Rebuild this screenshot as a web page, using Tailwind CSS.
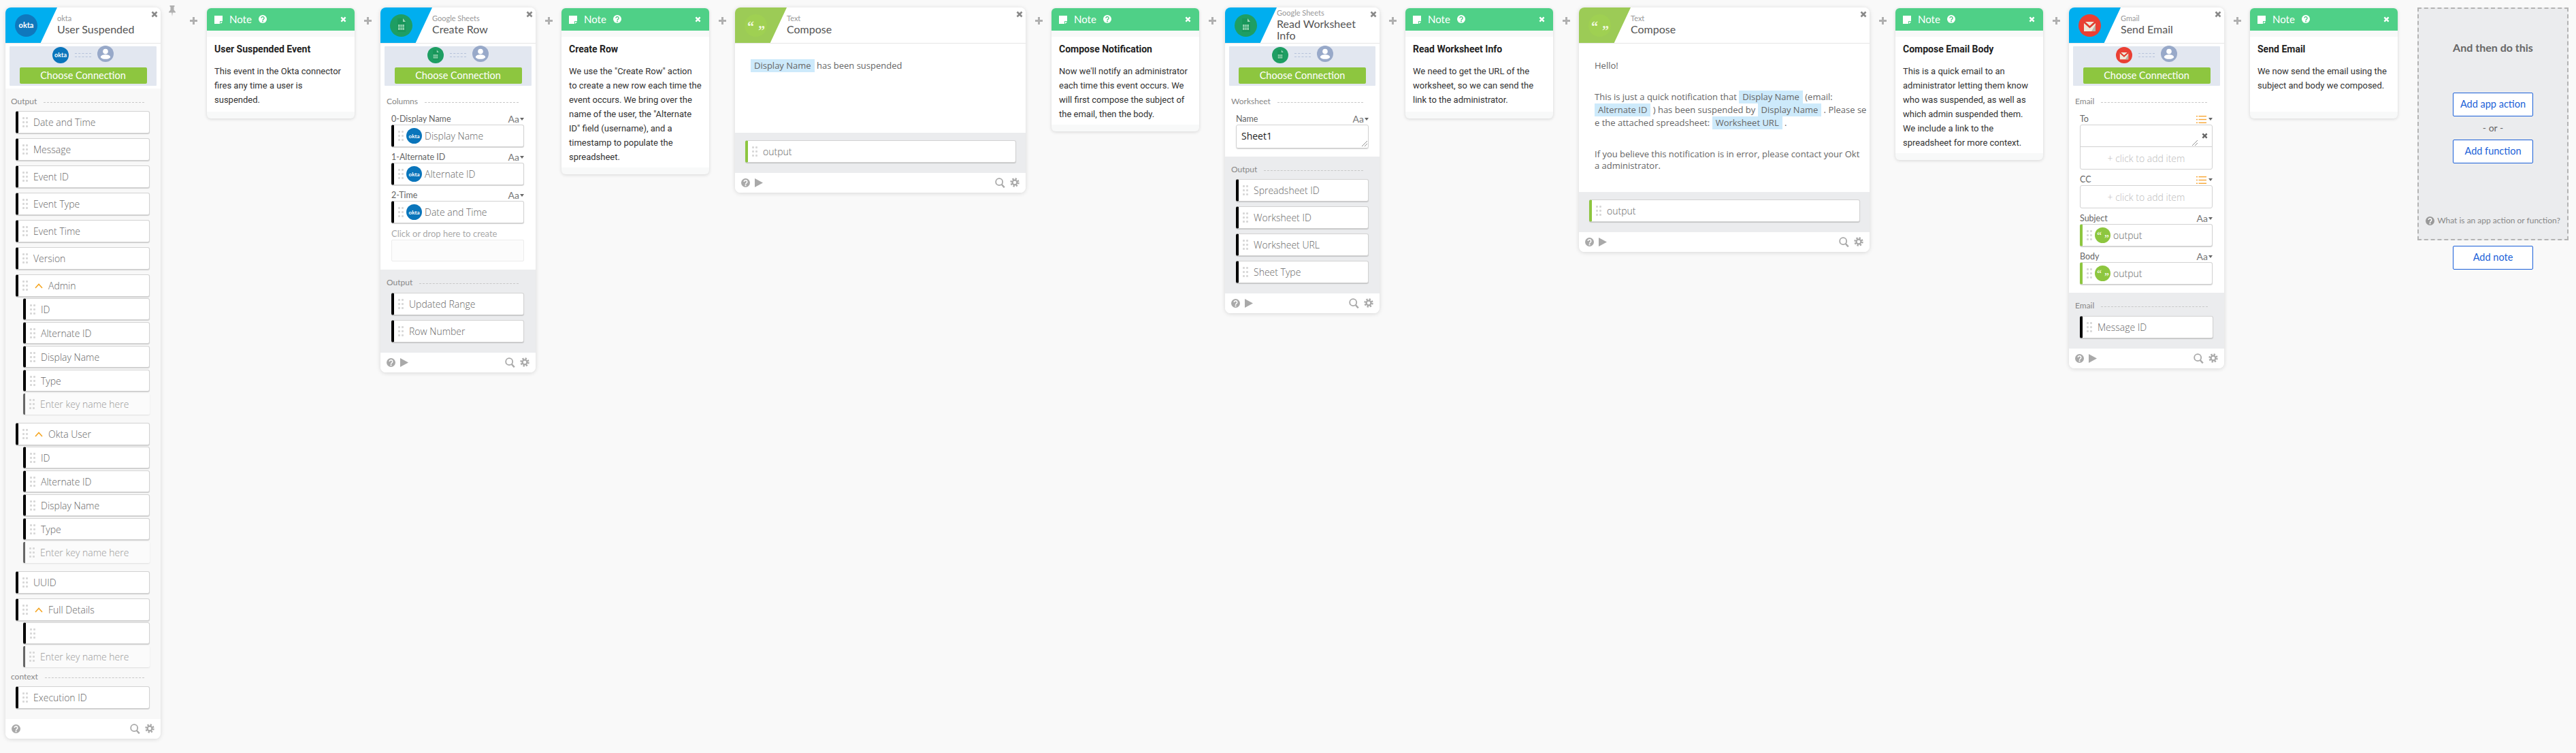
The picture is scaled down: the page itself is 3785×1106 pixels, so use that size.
<!DOCTYPE html>
<html lang="en">
<head>
  <meta charset="UTF-8" />
  <title>Zap editor</title>
  <script src="https://cdn.jsdelivr.net/npm/@tailwindcss/browser@4"></script>
</head>
<body class="bg-[#f9f9f9] font-['Open_Sans',sans-serif]">
  <svg class="hidden">
    <symbol id="dots" viewBox="0 0 8 15"><g fill="currentColor"><rect width="3" height="3" rx="1"/><rect x="5" width="3" height="3" rx="1"/><rect y="6" width="3" height="3" rx="1"/><rect x="5" y="6" width="3" height="3" rx="1"/><rect y="12" width="3" height="3" rx="1"/><rect x="5" y="12" width="3" height="3" rx="1"/></g></symbol>
    <symbol id="close" viewBox="0 0 10 10"><path d="M1.5 1.5l7 7M8.5 1.5l-7 7" stroke="currentColor" stroke-width="2.6" fill="none"/></symbol>
    <symbol id="help" viewBox="0 0 14 14"><circle cx="7" cy="7" r="7" fill="currentColor"/><path d="M4.6 5.4a2.4 2.4 0 1 1 3.7 2c-.9.6-1.3 1-1.3 1.9" stroke="#fff" stroke-width="1.7" fill="none"/><rect x="6" y="10.2" width="2" height="2" fill="#fff"/></symbol>
    <symbol id="helpgreen" viewBox="0 0 14 14"><circle cx="7" cy="7" r="7" fill="#fff"/><path d="M4.6 5.4a2.4 2.4 0 1 1 3.7 2c-.9.6-1.3 1-1.3 1.9" stroke="#4fd087" stroke-width="1.7" fill="none"/><rect x="6" y="10.2" width="2" height="2" fill="#4fd087"/></symbol>
    <symbol id="play" viewBox="0 0 12 13"><path d="M0 0L12 6.5L0 13Z" fill="currentColor"/></symbol>
    <symbol id="search" viewBox="0 0 15 15"><circle cx="6.2" cy="6.2" r="5" stroke="currentColor" stroke-width="1.8" fill="none"/><path d="M9.8 10l4 4.4" stroke="currentColor" stroke-width="2.4"/></symbol>
    <symbol id="gear" viewBox="0 0 14 14"><circle cx="7" cy="7" r="5.3" stroke="currentColor" stroke-width="2.8" stroke-dasharray="2.2 1.96" fill="none"/><circle cx="7" cy="7" r="3.4" stroke="currentColor" stroke-width="2.2" fill="none"/></symbol>
    <symbol id="page" viewBox="0 0 12 12"><path d="M0 0H12V8H8V12H0ZM9 9H12L9 12Z" fill="#fff"/></symbol>
    <symbol id="person" viewBox="0 0 24 24"><circle cx="12" cy="12" r="12" fill="#98a9c9"/><circle cx="12" cy="8.6" r="3.8" fill="#fff"/><path d="M4.8 17.2c.3-3 2.8-4 7.2-4s6.9 1 7.2 4c-1.2 1.7-3.8 2.6-7.2 2.6s-6-.9-7.2-2.6z" fill="#fff"/></symbol>
    <symbol id="pin" viewBox="0 0 10 16"><path d="M1.5 0H8.500V1.500L7.500 2.200V6.500L10 9.500V10.500H5.800L5 16L4.200 10.500H0V9.500L2.500 6.500V2.200L1.500 1.500Z" fill="currentColor"/></symbol>
    <symbol id="plus" viewBox="0 0 11 11"><path d="M5.500 0V11M0 5.500H11" stroke="currentColor" stroke-width="3"/></symbol>
    <symbol id="chev" viewBox="0 0 12 8"><path d="M1 7L6 1.500L11 7" stroke="currentColor" stroke-width="1.600" fill="none"/></symbol>
    <symbol id="caret" viewBox="0 0 6 4"><path d="M0 0H6L3 4Z" fill="currentColor"/></symbol>
    <symbol id="list" viewBox="0 0 15 11"><g fill="currentColor"><rect width="2" height="1.400"/><rect x="3.500" width="11.500" height="1.400"/><rect y="4.800" width="2" height="1.400"/><rect x="3.500" y="4.800" width="11.500" height="1.400"/><rect y="9.600" width="2" height="1.400"/><rect x="3.500" y="9.600" width="11.500" height="1.400"/></g></symbol>
    <symbol id="resize" viewBox="0 0 8 8"><path d="M0 8L8 0M4 8L8 4" stroke="#777" stroke-width=".8"/></symbol>
    <symbol id="sheet" viewBox="0 0 33 33"><path d="M11 6h8l4 5v15H11z" fill="#19965a"/><path d="M19 6l4 5h-4z" fill="#9fd6b8"/><path d="M12 15h9v8h-9z" fill="#8fd1ad"/><path d="M15 15v8M18 15v8M12 19h9" stroke="#19965a" stroke-width=".7"/></symbol>
    <symbol id="gmail" viewBox="0 0 33 33"><path d="M8 11h17v14H8z" fill="#efe8da"/><path d="M25 25H19L25 15z" fill="#b9b2a6"/><path d="M8 11h2L16.500 17L23 11h2v2L16.500 20.500L8 13z" fill="#e23d2e"/></symbol>
  </svg>

  <div id="board" class="flex items-start pl-[8px] pt-[11px] min-h-screen text-[#777]"></div>

  <script>
    const ic = (id, cls) => `<svg class="${cls}"><use href="#${id}"/></svg>`;
    const dots = ic("dots", "w-[8px] h-[15px] shrink-0 text-[#d8d8d8]");

    // little round service badges
    const okta = big => big
      ? `<div class="w-[33px] h-[33px] rounded-full bg-[#0f78bd] flex items-center justify-center text-white text-[11px] font-bold font-['Lato']">okta</div>`
      : `<div class="w-[24px] h-[24px] rounded-full bg-[#0a75bb] shrink-0 flex items-center justify-center text-white text-[9px] font-bold font-['Lato']">okta</div>`;
    const sheets = big => big
      ? `<div class="w-[33px] h-[33px] rounded-full bg-[#1e9e63]">${ic("sheet", "w-[33px] h-[33px]")}</div>`
      : `<div class="w-[24px] h-[24px] rounded-full bg-[#1e9e63] shrink-0">${ic("sheet", "w-[24px] h-[24px]")}</div>`;
    const gmail = big => big
      ? `<div class="w-[33px] h-[33px] rounded-full bg-[#ea3f33]">${ic("gmail", "w-[33px] h-[33px]")}</div>`
      : `<div class="w-[24px] h-[24px] rounded-full bg-[#ea3f33] shrink-0">${ic("gmail", "w-[24px] h-[24px]")}</div>`;
    const quoteBig = `<div class="w-[33px] h-[33px] rounded-full bg-[#9fd052] relative font-['Liberation_Serif'] font-bold text-[20px] leading-none text-[#eef7dc]"><span class="absolute left-[4px] top-[8px]">“</span><span class="absolute left-[20px] top-[14px]">”</span></div>`;
    const quoteSm = `<div class="w-[23px] h-[23px] rounded-full bg-[#8dc63f] shrink-0 relative font-['Liberation_Serif'] font-bold text-[14px] leading-none text-[#eef7dc]"><span class="absolute left-[3px] top-[5px]">“</span><span class="absolute left-[14px] top-[10px]">”</span></div>`;
    const oktaTok = `<div class="w-[23px] h-[23px] rounded-full bg-[#0a75bb] shrink-0 flex items-center justify-center text-white text-[8px] font-bold font-['Lato']">okta</div>`;

    const field = (text, o = {}) => `
      <div class="flex items-center bg-white border border-[#d2d2d2] border-l-4 ${o.bar || "border-l-black"} rounded-[3px] shadow-[0_1px_1px_rgba(0,0,0,.18)] pl-[6px] ${o.child ? "h-[32px] ml-[11px] mb-[3px]" : "h-[33px]"} ${o.mb || ""}">
        ${dots}
        ${o.tok ? `<span class="ml-[4px]">${o.tok}</span><span class="ml-[4px] text-[14px] font-light text-[#666]">${text}</span>` : ""}
        ${o.parent ? ic("chev", "w-[12px] h-[8px] ml-[10px] text-[#f5a623]") + `<span class="ml-[8px] text-[14px] font-light text-[#666]">${text}</span>` : ""}
        ${!o.tok && !o.parent ? `<span class="ml-[8px] text-[14px] font-light text-[#666]">${text}</span>` : ""}
      </div>`;
    const enterKey = `
      <div class="flex items-center h-[31px] ml-[11px] mb-[12px] bg-[#fbfbfb] border-l-[3px] border-l-[#666] rounded-[2px] shadow-[0_1px_2px_rgba(0,0,0,.1)] pl-[6px]">
        ${dots}<span class="ml-[8px] text-[14px] font-light text-[#999]">Enter key name here</span>
      </div>`;

    const head = (label, o = "") => `
      <div class="flex items-center h-[16px] mb-[6px] -ml-[7px] mr-[8px] ${o}">
        <span class="text-[12px] leading-[16px] text-[#888] font-['Lato']">${label}</span>
        <span class="flex-1 ml-[10px] mt-[3px] border-t border-dashed border-[#c8c8c8]"></span>
      </div>`;
    const aa = `<span class="flex items-center gap-[1px] text-[14px] leading-none text-[#777] font-['Lato']">Aa${ic("caret", "w-[6px] h-[4px] text-[#666]")}</span>`;
    const listType = `<span class="flex items-center gap-[3px]">${ic("list", "w-[15px] h-[11px] text-[#f7a634]")}${ic("caret", "w-[6px] h-[4px] text-[#666]")}</span>`;
    const label = (text, right = aa, cls = "mt-[7px]") => `
      <div class="flex items-center justify-between h-[16px] ${cls}"><span class="text-[12.5px] leading-[16px] text-[#666] font-['Lato']">${text}</span>${right}</div>`;

    const footer = play => `
      <div class="h-[29px] bg-white flex items-center pl-[9px] pr-[9px] gap-[7px] text-[#a9a9a9]">
        ${ic("help", "w-[13px] h-[13px]")}
        ${play ? ic("play", "w-[12px] h-[13px]") : ""}
        ${ic("search", "w-[15px] h-[15px] ml-auto")}
        ${ic("gear", "w-[14px] h-[14px] mb-[2px]")}
      </div>`;

    const header = (logo, service, title, color) => `
      <div class="relative h-[53px] bg-white border-b border-[#e6e6e6] flex">
        <div class="w-[76px] h-[52px] shrink-0 ${color} [clip-path:polygon(0_0,100%_0,68%_100%,0_100%)] pl-[14px] pt-[10px]">${logo}</div>
        <div class="flex flex-col justify-center -mt-[2px] pr-[16px]">
          <div class="text-[11px] leading-[12px] text-[#999] font-['Lato']">${service}</div>
          <div class="text-[16px] leading-[17px] text-[#555] font-['Lato'] mt-[1px]">${title}</div>
        </div>
        ${ic("close", "absolute right-[4px] top-[5px] w-[10px] h-[10px] text-[#888]")}
      </div>`;

    const connect = small => `
      <div class="bg-white pt-[4px] pb-[4px] px-[6px]">
        <div class="h-[58px] bg-[#e2e7f0] rounded-[1px] flex flex-col items-center">
          <div class="flex h-[26px] -mt-[1px] mb-[6px] items-start">
            <div class="mt-[2px]">${small}</div>
            <div class="w-[24px] mx-[9px] mt-[11px] h-[6px] border-y border-dashed border-[#b5c2da]"></div>
            ${ic("person", "w-[24px] h-[24px]")}
          </div>
          <div class="w-[187px] h-[24px] rounded-[2px] bg-[#8dc63f] text-white text-[14.5px] leading-[24px] text-center font-['Lato']">Choose Connection</div>
        </div>
      </div>`;

    const card = (w, body) => `<div class="${w} shrink-0 rounded-[8px] overflow-hidden bg-white shadow-[0_1px_6px_rgba(0,0,0,.14)]">${body}</div>`;

    const note = (title, text) => `
      <div class="w-[217px] shrink-0 mt-[1px] rounded-[6px] overflow-hidden bg-[#f8f9f9] shadow-[0_1px_5px_rgba(0,0,0,.14)]">
        <div class="h-[33px] bg-[#4fd087] flex items-center pl-[11px] pr-[12px] text-white">
          ${ic("page", "w-[12px] h-[12px]")}
          <span class="ml-[10px] text-[15px] font-['Lato']">Note</span>
          ${ic("helpgreen", "w-[12px] h-[12px] ml-[10px] -mt-[1px]")}
          ${ic("close", "w-[9px] h-[9px] ml-auto text-white")}
        </div>
        <div class="mt-[9px] mb-[10px] bg-white min-h-[110px] px-[11px] pt-[9px] pb-[5px] font-['Roboto']">
          <div class="text-[14px] leading-[18px] font-bold text-[#222]">${title}</div>
          <p class="mt-[13px] text-[13px] leading-[21px] text-[#333]">${text}</p>
        </div>
      </div>`;

    const gap = `<div class="w-[38px] shrink-0 flex justify-center pt-[14px] text-[#b0b0b0]">${ic("plus", "w-[11px] h-[11px]")}</div>`;
    const firstGap = `
      <div class="w-[68px] shrink-0 relative text-[#b0b0b0]">
        ${ic("pin", "absolute left-[12px] -top-[3px] w-[10px] h-[16px]")}
        <div class="flex justify-end pr-[14px] pt-[14px]">${ic("plus", "w-[11px] h-[11px]")}</div>
      </div>`;

    const pill = t => `<span class="inline-block h-[19px] bg-[#cdeafb] px-[5px] text-[#666] leading-[19px]">${t}</span>`;
    const greenBar = "border-l-[#8dc63f]";

    // ---- trigger
    const trigger = card("w-[228px]", header(okta(true), "okta", "User Suspended", "bg-[#00aeef]") + connect(okta(false)) + `
      <div class="bg-[#f8f8f8] pt-[11px] pb-[15px] pl-[15px] pr-[16px]">
        ${head("Output")}
        ${["Date and Time","Message","Event ID","Event Type","Event Time","Version"].map(t => field(t, {mb: "mb-[7px]"})).join("")}
        ${field("Admin", {parent: true, mb: "mb-[2px]"})}
        ${["ID","Alternate ID","Display Name","Type"].map(t => field(t, {child: true})).join("")}
        ${enterKey}
        ${field("Okta User", {parent: true, mb: "mb-[2px]"})}
        ${["ID","Alternate ID","Display Name","Type"].map(t => field(t, {child: true})).join("")}
        ${enterKey}
        ${field("UUID", {mb: "mb-[7px]"})}
        ${field("Full Details", {parent: true, mb: "mb-[2px]"})}
        ${field("", {child: true})}
        ${enterKey.replace("mb-[12px]", "mb-[6px]")}
        ${head("context")}
        ${field("Execution ID")}
      </div>` + footer(false));

    // ---- create row
    const createRow = card("w-[228px]", header(sheets(true), "Google Sheets", "Create Row", "bg-[#00aeef]") + connect(sheets(false)) + `
      <div class="pt-[11px] pb-[12px] pl-[16px] pr-[17px]">
        ${head("Columns", "mb-[10px]")}
        ${label("0-Display Name", aa, "")}
        ${field("Display Name", {tok: oktaTok})}
        ${label("1-Alternate ID")}
        ${field("Alternate ID", {tok: oktaTok})}
        ${label("2-Time")}
        ${field("Date and Time", {tok: oktaTok})}
        <div class="mt-[7px] h-[17px] text-[13px] leading-[16px] text-[#aaa] font-['Lato']">Click or drop here to create</div>
        <div class="h-[32px] border border-[#ececec] rounded-[2px] bg-[#fcfcfc]"></div>
      </div>
      <div class="bg-[#ebecee] pt-[11px] pb-[15px] pl-[16px] pr-[17px]">
        ${head("Output", "mb-[7px]")}
        ${field("Updated Range", {mb: "mb-[7px]"})}
        ${field("Row Number")}
      </div>` + footer(true));

    // ---- compose 1
    const compose = (body, h) => card("w-[427px]", header(quoteBig, "Text", "Compose", "bg-[#9ccb56]") + `
      <div class="${h} px-[23px] text-[13px] text-[#666] whitespace-nowrap">${body}</div>
      <div class="bg-[#ebecee] pt-[11px] pb-[15px] pl-[15px] pr-[14px]">${field("output", {bar: greenBar})}</div>` + footer(true));

    const compose1 = compose(`<p class="pt-[23px] leading-[19px]">${pill("Display Name")} has been suspended</p>`, "h-[131px]");
    const compose2 = compose(`
      <p class="pt-[24px] leading-[17px]">Hello!</p>
      <p class="mt-[28px] leading-[19px]">This is just a quick notification that ${pill("Display Name")} (email:<br>${pill("Alternate ID")} ) has been suspended by ${pill("Display Name")} . Please se<br>e the attached spreadsheet: ${pill("Worksheet URL")} .</p>
      <p class="mt-[28px] leading-[17px]">If you believe this notification is in error, please contact your Okt<br>a administrator.</p>`, "h-[218px]");

    // ---- read worksheet
    const readWs = card("w-[227px]", header(sheets(true), "Google Sheets", "Read Worksheet Info", "bg-[#00aeef]") + connect(sheets(false)) + `
      <div class="pt-[11px] pb-[12px] pl-[16px] pr-[16px]">
        ${head("Worksheet", "mb-[10px]")}
        ${label("Name", aa, "")}
        <div class="relative h-[35px] border border-[#d2d2d2] rounded-[3px] shadow-[0_1px_1px_rgba(0,0,0,.18)] pl-[7px] text-[14px] leading-[32px] text-[#222]">Sheet1${ic("resize", "absolute right-[1px] bottom-[2px] w-[8px] h-[8px]")}</div>
      </div>
      <div class="bg-[#ebecee] pt-[11px] pb-[15px] pl-[16px] pr-[16px]">
        ${head("Output")}
        ${field("Spreadsheet ID", {mb: "mb-[7px]"})}
        ${field("Worksheet ID", {mb: "mb-[7px]"})}
        ${field("Worksheet URL", {mb: "mb-[7px]"})}
        ${field("Sheet Type")}
      </div>` + footer(true));

    // ---- send email
    const addItem = `<div class="text-center text-[14px] font-light text-[#bbb]">+ click to add item</div>`;
    const sendMail = card("w-[228px]", header(gmail(true), "Gmail", "Send Email", "bg-[#00aeef]") + connect(gmail(false)) + `
      <div class="pt-[11px] pb-[12px] pl-[16px] pr-[17px]">
        ${head("Email", "mb-[10px]")}
        ${label("To", listType, "")}
        <div class="h-[66px] border border-[#d2d2d2] rounded-[3px] flex flex-col">
          <div class="relative h-[32px] border-b border-[#d2d2d2]">
            ${ic("close", "absolute right-[6px] top-[11px] w-[9px] h-[9px] text-[#666]")}
            ${ic("resize", "absolute right-[21px] bottom-[1px] w-[8px] h-[8px]")}
          </div>
          <div class="flex-1 flex items-center justify-center">${addItem}</div>
        </div>
        ${label("CC", listType)}
        <div class="h-[34px] border border-[#d2d2d2] rounded-[3px] flex items-center justify-center">${addItem}</div>
        ${label("Subject")}
        ${field("output", {bar: greenBar, tok: quoteSm})}
        ${label("Body")}
        ${field("output", {bar: greenBar, tok: quoteSm})}
      </div>
      <div class="bg-[#ebecee] pt-[11px] pb-[15px] pl-[16px] pr-[16px]">
        ${head("Email", "mb-[7px]")}
        ${field("Message ID")}
      </div>` + footer(true));

    const addBtn = (t, cls) => `<div class="w-[118px] h-[35px] bg-white border border-[#1a5fd8] rounded-[2px] text-[#1a5fd8] text-[14.5px] leading-[32px] text-center font-['Lato'] ${cls}">${t}</div>`;
    const nextStep = `
      <div class="w-[222px] shrink-0 flex flex-col items-center">
        <div class="w-full h-[342px] bg-[#ebecee] border-2 border-dashed border-[#b4b4b4] flex flex-col items-center">
          <div class="mt-[47px] text-[16px] leading-[20px] font-bold text-[#666] font-['Lato']">And then do this</div>
          ${addBtn("Add app action", "mt-[56px]")}
          <div class="mt-[8px] h-[18px] text-[14px] leading-[18px] text-[#666] font-['Lato']">- or -</div>
          ${addBtn("Add function", "mt-[8px]")}
          <div class="mt-auto mb-[18px] flex items-center gap-[4px] text-[12px] text-[#888] font-['Lato'] whitespace-nowrap">${ic("help", "w-[13px] h-[13px] text-[#999]")}What is an app action or function?</div>
        </div>
        ${addBtn("Add note", "mt-[8px]")}
      </div>`;

    document.getElementById("board").innerHTML = [
      trigger, firstGap,
      note("User Suspended Event", "This event in the Okta connector<br>fires any time a user is<br>suspended."), gap,
      createRow, gap,
      note("Create Row", `We use the "Create Row" action<br>to create a new row each time the<br>event occurs. We bring over the<br>name of the user, the "Alternate<br>ID" field (username), and a<br>timestamp to populate the<br>spreadsheet.`), gap,
      compose1, gap,
      note("Compose Notification", "Now we'll notify an administrator<br>each time this event occurs. We<br>will first compose the subject of<br>the email, then the body."), gap,
      readWs, gap,
      note("Read Worksheet Info", "We need to get the URL of the<br>worksheet, so we can send the<br>link to the administrator."), gap,
      compose2, gap,
      note("Compose Email Body", "This is a quick email to an<br>administrator letting them know<br>who was suspended, as well as<br>which admin suspended them.<br>We include a link to the<br>spreadsheet for more context."), gap,
      sendMail, gap,
      note("Send Email", "We now send the email using the<br>subject and body we composed."),
      `<div class="w-[29px] shrink-0"></div>`,
      nextStep
    ].join("");
  </script>
</body>
</html>
